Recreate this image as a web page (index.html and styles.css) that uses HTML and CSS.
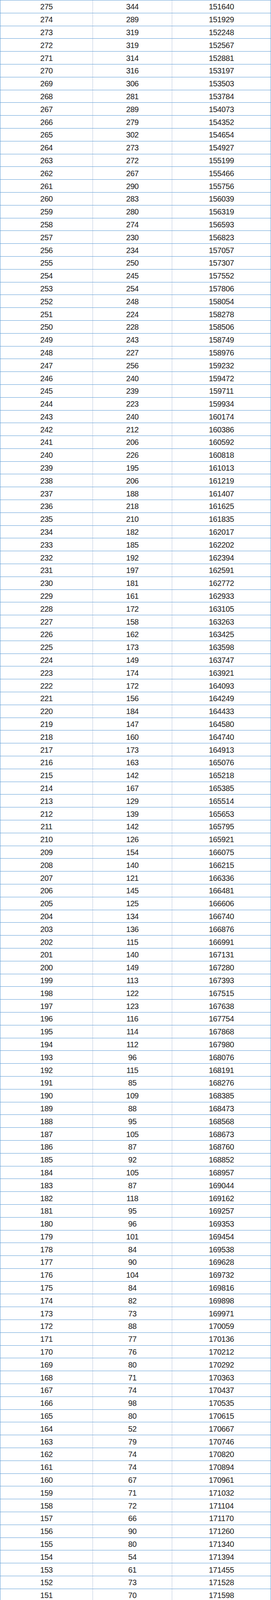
FILE: index.html
```html
<!DOCTYPE html>
<html lang="zh">
<head>
<meta charset="utf-8">
<meta name="viewport" content="width=device-width, initial-scale=1">
<title>分数段</title>
<link rel="stylesheet" href="styles.css">
</head>
<body>
<div class="score-table">
<div class="row"><div class="cell">275</div><div class="cell">344</div><div class="cell">151640</div></div>
<div class="row"><div class="cell">274</div><div class="cell">289</div><div class="cell">151929</div></div>
<div class="row"><div class="cell">273</div><div class="cell">319</div><div class="cell">152248</div></div>
<div class="row"><div class="cell">272</div><div class="cell">319</div><div class="cell">152567</div></div>
<div class="row"><div class="cell">271</div><div class="cell">314</div><div class="cell">152881</div></div>
<div class="row"><div class="cell">270</div><div class="cell">316</div><div class="cell">153197</div></div>
<div class="row"><div class="cell">269</div><div class="cell">306</div><div class="cell">153503</div></div>
<div class="row"><div class="cell">268</div><div class="cell">281</div><div class="cell">153784</div></div>
<div class="row"><div class="cell">267</div><div class="cell">289</div><div class="cell">154073</div></div>
<div class="row"><div class="cell">266</div><div class="cell">279</div><div class="cell">154352</div></div>
<div class="row"><div class="cell">265</div><div class="cell">302</div><div class="cell">154654</div></div>
<div class="row"><div class="cell">264</div><div class="cell">273</div><div class="cell">154927</div></div>
<div class="row"><div class="cell">263</div><div class="cell">272</div><div class="cell">155199</div></div>
<div class="row"><div class="cell">262</div><div class="cell">267</div><div class="cell">155466</div></div>
<div class="row"><div class="cell">261</div><div class="cell">290</div><div class="cell">155756</div></div>
<div class="row"><div class="cell">260</div><div class="cell">283</div><div class="cell">156039</div></div>
<div class="row"><div class="cell">259</div><div class="cell">280</div><div class="cell">156319</div></div>
<div class="row"><div class="cell">258</div><div class="cell">274</div><div class="cell">156593</div></div>
<div class="row"><div class="cell">257</div><div class="cell">230</div><div class="cell">156823</div></div>
<div class="row"><div class="cell">256</div><div class="cell">234</div><div class="cell">157057</div></div>
<div class="row"><div class="cell">255</div><div class="cell">250</div><div class="cell">157307</div></div>
<div class="row"><div class="cell">254</div><div class="cell">245</div><div class="cell">157552</div></div>
<div class="row"><div class="cell">253</div><div class="cell">254</div><div class="cell">157806</div></div>
<div class="row"><div class="cell">252</div><div class="cell">248</div><div class="cell">158054</div></div>
<div class="row"><div class="cell">251</div><div class="cell">224</div><div class="cell">158278</div></div>
<div class="row"><div class="cell">250</div><div class="cell">228</div><div class="cell">158506</div></div>
<div class="row"><div class="cell">249</div><div class="cell">243</div><div class="cell">158749</div></div>
<div class="row"><div class="cell">248</div><div class="cell">227</div><div class="cell">158976</div></div>
<div class="row"><div class="cell">247</div><div class="cell">256</div><div class="cell">159232</div></div>
<div class="row"><div class="cell">246</div><div class="cell">240</div><div class="cell">159472</div></div>
<div class="row"><div class="cell">245</div><div class="cell">239</div><div class="cell">159711</div></div>
<div class="row"><div class="cell">244</div><div class="cell">223</div><div class="cell">159934</div></div>
<div class="row"><div class="cell">243</div><div class="cell">240</div><div class="cell">160174</div></div>
<div class="row"><div class="cell">242</div><div class="cell">212</div><div class="cell">160386</div></div>
<div class="row"><div class="cell">241</div><div class="cell">206</div><div class="cell">160592</div></div>
<div class="row"><div class="cell">240</div><div class="cell">226</div><div class="cell">160818</div></div>
<div class="row"><div class="cell">239</div><div class="cell">195</div><div class="cell">161013</div></div>
<div class="row"><div class="cell">238</div><div class="cell">206</div><div class="cell">161219</div></div>
<div class="row"><div class="cell">237</div><div class="cell">188</div><div class="cell">161407</div></div>
<div class="row"><div class="cell">236</div><div class="cell">218</div><div class="cell">161625</div></div>
<div class="row"><div class="cell">235</div><div class="cell">210</div><div class="cell">161835</div></div>
<div class="row"><div class="cell">234</div><div class="cell">182</div><div class="cell">162017</div></div>
<div class="row"><div class="cell">233</div><div class="cell">185</div><div class="cell">162202</div></div>
<div class="row"><div class="cell">232</div><div class="cell">192</div><div class="cell">162394</div></div>
<div class="row"><div class="cell">231</div><div class="cell">197</div><div class="cell">162591</div></div>
<div class="row"><div class="cell">230</div><div class="cell">181</div><div class="cell">162772</div></div>
<div class="row"><div class="cell">229</div><div class="cell">161</div><div class="cell">162933</div></div>
<div class="row"><div class="cell">228</div><div class="cell">172</div><div class="cell">163105</div></div>
<div class="row"><div class="cell">227</div><div class="cell">158</div><div class="cell">163263</div></div>
<div class="row"><div class="cell">226</div><div class="cell">162</div><div class="cell">163425</div></div>
<div class="row"><div class="cell">225</div><div class="cell">173</div><div class="cell">163598</div></div>
<div class="row"><div class="cell">224</div><div class="cell">149</div><div class="cell">163747</div></div>
<div class="row"><div class="cell">223</div><div class="cell">174</div><div class="cell">163921</div></div>
<div class="row"><div class="cell">222</div><div class="cell">172</div><div class="cell">164093</div></div>
<div class="row"><div class="cell">221</div><div class="cell">156</div><div class="cell">164249</div></div>
<div class="row"><div class="cell">220</div><div class="cell">184</div><div class="cell">164433</div></div>
<div class="row"><div class="cell">219</div><div class="cell">147</div><div class="cell">164580</div></div>
<div class="row"><div class="cell">218</div><div class="cell">160</div><div class="cell">164740</div></div>
<div class="row"><div class="cell">217</div><div class="cell">173</div><div class="cell">164913</div></div>
<div class="row"><div class="cell">216</div><div class="cell">163</div><div class="cell">165076</div></div>
<div class="row"><div class="cell">215</div><div class="cell">142</div><div class="cell">165218</div></div>
<div class="row"><div class="cell">214</div><div class="cell">167</div><div class="cell">165385</div></div>
<div class="row"><div class="cell">213</div><div class="cell">129</div><div class="cell">165514</div></div>
<div class="row"><div class="cell">212</div><div class="cell">139</div><div class="cell">165653</div></div>
<div class="row"><div class="cell">211</div><div class="cell">142</div><div class="cell">165795</div></div>
<div class="row"><div class="cell">210</div><div class="cell">126</div><div class="cell">165921</div></div>
<div class="row"><div class="cell">209</div><div class="cell">154</div><div class="cell">166075</div></div>
<div class="row"><div class="cell">208</div><div class="cell">140</div><div class="cell">166215</div></div>
<div class="row"><div class="cell">207</div><div class="cell">121</div><div class="cell">166336</div></div>
<div class="row"><div class="cell">206</div><div class="cell">145</div><div class="cell">166481</div></div>
<div class="row"><div class="cell">205</div><div class="cell">125</div><div class="cell">166606</div></div>
<div class="row"><div class="cell">204</div><div class="cell">134</div><div class="cell">166740</div></div>
<div class="row"><div class="cell">203</div><div class="cell">136</div><div class="cell">166876</div></div>
<div class="row"><div class="cell">202</div><div class="cell">115</div><div class="cell">166991</div></div>
<div class="row"><div class="cell">201</div><div class="cell">140</div><div class="cell">167131</div></div>
<div class="row"><div class="cell">200</div><div class="cell">149</div><div class="cell">167280</div></div>
<div class="row"><div class="cell">199</div><div class="cell">113</div><div class="cell">167393</div></div>
<div class="row"><div class="cell">198</div><div class="cell">122</div><div class="cell">167515</div></div>
<div class="row"><div class="cell">197</div><div class="cell">123</div><div class="cell">167638</div></div>
<div class="row"><div class="cell">196</div><div class="cell">116</div><div class="cell">167754</div></div>
<div class="row"><div class="cell">195</div><div class="cell">114</div><div class="cell">167868</div></div>
<div class="row"><div class="cell">194</div><div class="cell">112</div><div class="cell">167980</div></div>
<div class="row"><div class="cell">193</div><div class="cell">96</div><div class="cell">168076</div></div>
<div class="row"><div class="cell">192</div><div class="cell">115</div><div class="cell">168191</div></div>
<div class="row"><div class="cell">191</div><div class="cell">85</div><div class="cell">168276</div></div>
<div class="row"><div class="cell">190</div><div class="cell">109</div><div class="cell">168385</div></div>
<div class="row"><div class="cell">189</div><div class="cell">88</div><div class="cell">168473</div></div>
<div class="row"><div class="cell">188</div><div class="cell">95</div><div class="cell">168568</div></div>
<div class="row"><div class="cell">187</div><div class="cell">105</div><div class="cell">168673</div></div>
<div class="row"><div class="cell">186</div><div class="cell">87</div><div class="cell">168760</div></div>
<div class="row"><div class="cell">185</div><div class="cell">92</div><div class="cell">168852</div></div>
<div class="row"><div class="cell">184</div><div class="cell">105</div><div class="cell">168957</div></div>
<div class="row"><div class="cell">183</div><div class="cell">87</div><div class="cell">169044</div></div>
<div class="row"><div class="cell">182</div><div class="cell">118</div><div class="cell">169162</div></div>
<div class="row"><div class="cell">181</div><div class="cell">95</div><div class="cell">169257</div></div>
<div class="row"><div class="cell">180</div><div class="cell">96</div><div class="cell">169353</div></div>
<div class="row"><div class="cell">179</div><div class="cell">101</div><div class="cell">169454</div></div>
<div class="row"><div class="cell">178</div><div class="cell">84</div><div class="cell">169538</div></div>
<div class="row"><div class="cell">177</div><div class="cell">90</div><div class="cell">169628</div></div>
<div class="row"><div class="cell">176</div><div class="cell">104</div><div class="cell">169732</div></div>
<div class="row"><div class="cell">175</div><div class="cell">84</div><div class="cell">169816</div></div>
<div class="row"><div class="cell">174</div><div class="cell">82</div><div class="cell">169898</div></div>
<div class="row"><div class="cell">173</div><div class="cell">73</div><div class="cell">169971</div></div>
<div class="row"><div class="cell">172</div><div class="cell">88</div><div class="cell">170059</div></div>
<div class="row"><div class="cell">171</div><div class="cell">77</div><div class="cell">170136</div></div>
<div class="row"><div class="cell">170</div><div class="cell">76</div><div class="cell">170212</div></div>
<div class="row"><div class="cell">169</div><div class="cell">80</div><div class="cell">170292</div></div>
<div class="row"><div class="cell">168</div><div class="cell">71</div><div class="cell">170363</div></div>
<div class="row"><div class="cell">167</div><div class="cell">74</div><div class="cell">170437</div></div>
<div class="row"><div class="cell">166</div><div class="cell">98</div><div class="cell">170535</div></div>
<div class="row"><div class="cell">165</div><div class="cell">80</div><div class="cell">170615</div></div>
<div class="row"><div class="cell">164</div><div class="cell">52</div><div class="cell">170667</div></div>
<div class="row"><div class="cell">163</div><div class="cell">79</div><div class="cell">170746</div></div>
<div class="row"><div class="cell">162</div><div class="cell">74</div><div class="cell">170820</div></div>
<div class="row"><div class="cell">161</div><div class="cell">74</div><div class="cell">170894</div></div>
<div class="row"><div class="cell">160</div><div class="cell">67</div><div class="cell">170961</div></div>
<div class="row"><div class="cell">159</div><div class="cell">71</div><div class="cell">171032</div></div>
<div class="row"><div class="cell">158</div><div class="cell">72</div><div class="cell">171104</div></div>
<div class="row"><div class="cell">157</div><div class="cell">66</div><div class="cell">171170</div></div>
<div class="row"><div class="cell">156</div><div class="cell">90</div><div class="cell">171260</div></div>
<div class="row"><div class="cell">155</div><div class="cell">80</div><div class="cell">171340</div></div>
<div class="row"><div class="cell">154</div><div class="cell">54</div><div class="cell">171394</div></div>
<div class="row"><div class="cell">153</div><div class="cell">61</div><div class="cell">171455</div></div>
<div class="row"><div class="cell">152</div><div class="cell">73</div><div class="cell">171528</div></div>
<div class="row"><div class="cell">151</div><div class="cell">70</div><div class="cell">171598</div></div>
<div class="row"><div class="cell">150</div><div class="cell">82</div><div class="cell">171680</div></div>
<div class="row"><div class="cell">149</div><div class="cell">64</div><div class="cell">171744</div></div>
<div class="row"><div class="cell">148</div><div class="cell">71</div><div class="cell">171815</div></div>
<div class="row"><div class="cell">147</div><div class="cell">73</div><div class="cell">171888</div></div>
<div class="row"><div class="cell">146</div><div class="cell">64</div><div class="cell">171952</div></div>
<div class="row"><div class="cell">145</div><div class="cell">62</div><div class="cell">172014</div></div>
<div class="row"><div class="cell">144</div><div class="cell">84</div><div class="cell">172098</div></div>
<div class="row"><div class="cell">143</div><div class="cell">80</div><div class="cell">172178</div></div>
<div class="row"><div class="cell">142</div><div class="cell">73</div><div class="cell">172251</div></div>
<div class="row"><div class="cell">141</div><div class="cell">71</div><div class="cell">172322</div></div>
<div class="row"><div class="cell">140</div><div class="cell">79</div><div class="cell">172401</div></div>
<div class="row"><div class="cell">139</div><div class="cell">78</div><div class="cell">172479</div></div>
<div class="row"><div class="cell">138</div><div class="cell">82</div><div class="cell">172561</div></div>
<div class="row"><div class="cell">137</div><div class="cell">80</div><div class="cell">172641</div></div>
<div class="row"><div class="cell">136</div><div class="cell">71</div><div class="cell">172712</div></div>
<div class="row"><div class="cell">135</div><div class="cell">83</div><div class="cell">172795</div></div>
<div class="row"><div class="cell">134</div><div class="cell">82</div><div class="cell">172877</div></div>
<div class="row"><div class="cell">133</div><div class="cell">72</div><div class="cell">172949</div></div>
<div class="row"><div class="cell">132</div><div class="cell">86</div><div class="cell">173035</div></div>
<div class="row"><div class="cell">131</div><div class="cell">88</div><div class="cell">173123</div></div>
<div class="row"><div class="cell">130</div><div class="cell">86</div><div class="cell">173209</div></div>
<div class="row"><div class="cell">129</div><div class="cell">79</div><div class="cell">173288</div></div>
<div class="row"><div class="cell">128</div><div class="cell">86</div><div class="cell">173374</div></div>
<div class="row"><div class="cell">127</div><div class="cell">86</div><div class="cell">173460</div></div>
<div class="row"><div class="cell">126</div><div class="cell">95</div><div class="cell">173555</div></div>
<div class="row"><div class="cell">125</div><div class="cell">86</div><div class="cell">173641</div></div>
<div class="row"><div class="cell">124</div><div class="cell">89</div><div class="cell">173730</div></div>
<div class="row"><div class="cell">123</div><div class="cell">101</div><div class="cell">173831</div></div>
<div class="row"><div class="cell">122</div><div class="cell">84</div><div class="cell">173915</div></div>
<div class="row"><div class="cell">121</div><div class="cell">83</div><div class="cell">173998</div></div>
<div class="row"><div class="cell">120</div><div class="cell">77</div><div class="cell">174075</div></div>
<div class="row"><div class="cell">119</div><div class="cell">95</div><div class="cell">174170</div></div>
<div class="row"><div class="cell">118</div><div class="cell">73</div><div class="cell">174243</div></div>
<div class="row"><div class="cell">117</div><div class="cell">101</div><div class="cell">174344</div></div>
<div class="row"><div class="cell">116</div><div class="cell">91</div><div class="cell">174435</div></div>
<div class="row"><div class="cell">115</div><div class="cell">86</div><div class="cell">174521</div></div>
<div class="row"><div class="cell">114</div><div class="cell">85</div><div class="cell">174606</div></div>
<div class="row"><div class="cell">113</div><div class="cell">79</div><div class="cell">174685</div></div>
<div class="row"><div class="cell">112</div><div class="cell">81</div><div class="cell">174766</div></div>
<div class="row"><div class="cell">111</div><div class="cell">89</div><div class="cell">174855</div></div>
<div class="row"><div class="cell">110</div><div class="cell">89</div><div class="cell">174944</div></div>
<div class="row"><div class="cell">109</div><div class="cell">81</div><div class="cell">175025</div></div>
<div class="row"><div class="cell">108</div><div class="cell">71</div><div class="cell">175096</div></div>
<div class="row"><div class="cell">107</div><div class="cell">75</div><div class="cell">175171</div></div>
<div class="row"><div class="cell">106</div><div class="cell">78</div><div class="cell">175249</div></div>
<div class="row"><div class="cell">105</div><div class="cell">82</div><div class="cell">175331</div></div>
<div class="row"><div class="cell">104</div><div class="cell">67</div><div class="cell">175398</div></div>
<div class="row"><div class="cell">103</div><div class="cell">61</div><div class="cell">175459</div></div>
<div class="row"><div class="cell">102</div><div class="cell">60</div><div class="cell">175519</div></div>
<div class="row"><div class="cell">101</div><div class="cell">70</div><div class="cell">175589</div></div>
<div class="row"><div class="cell">0-100</div><div class="cell">6501</div><div class="cell">182090</div></div>
</div>
</body>
</html>
```

FILE: styles.css
```css
html {
  -webkit-text-size-adjust: 100%;
  text-size-adjust: 100%;
}

html, body {
  margin: 0;
  padding: 0;
  background: #ffffff;
}

.score-table {
  width: 694px;
  box-sizing: border-box;
  border-top: 1px solid #5b9bd5;
  border-left: 1px solid #5b9bd5;
  border-right: 1px solid #5b9bd5;
  font-family: "Liberation Sans", Arial, sans-serif;
  font-size: 20px;
  letter-spacing: -0.4px;
  line-height: 20px;
  color: #1c1c1c;
}

.row {
  display: grid;
  grid-template-columns: 237px 203px 1fr;
  height: 32.81px;
  box-sizing: border-box;
  border-bottom: 1px solid #5b9bd5;
  overflow: hidden;
}

.cell {
  display: flex;
  align-items: center;
  justify-content: center;
  box-sizing: border-box;
  border-right: 1px solid #bcc8de;
  padding-top: 1px;
}

.cell:last-child {
  border-right: none;
}
```
